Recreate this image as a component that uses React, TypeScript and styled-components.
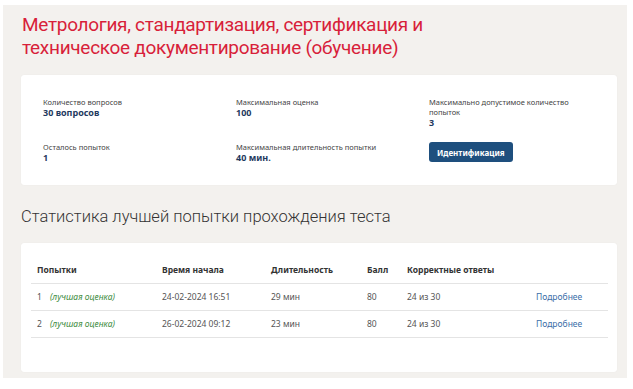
import React, { FC } from 'react';
import styled, { createGlobalStyle } from 'styled-components';

const GlobalStyle = createGlobalStyle`
  html, body {
    margin: 0;
    padding: 0;
    background: #fff;
  }
  * {
    box-sizing: border-box;
  }
`;

const Page = styled.div`
  margin: 5px 6px 11px 3px;
  height: 373px;
  background: #f3f1ee;
  padding: 8px 10px 0 18px;
  font-family: 'Noto Sans', 'Open Sans', sans-serif;
`;

const Title = styled.h1`
  margin: 0 0 16px 1px;
  font-family: Roboto, 'Liberation Sans', sans-serif;
  font-weight: 400;
  font-size: 19px;
  letter-spacing: -0.3px;
  line-height: 23px;
  color: #d81f3a;
  width: 440px;
`;

const Card = styled.div`
  background: #fff;
  border-radius: 3px;
  box-shadow: 0 0 1px rgba(0, 0, 0, 0.08);
`;

const InfoCard = styled(Card)`
  padding: 22px 10px 21px 22px;
  display: grid;
  grid-template-columns: 193px 193px 1fr;
  row-gap: 13px;
`;

const Info = styled.div`
  display: flex;
  flex-direction: column;
  align-items: flex-start;
`;

const Label = styled.div`
  font-size: 7.5px;
  line-height: 10px;
  color: #444;
  max-width: 150px;
`;

const Value = styled.div`
  font-size: 9px;
  line-height: 12px;
  font-weight: 700;
  color: #1f3a60;
`;

const Button = styled.button`
  height: 20px;
  padding: 0 8px;
  border: none;
  border-radius: 3px;
  background: #1e4f7e;
  color: #fff;
  font-family: inherit;
  font-size: 8px;
  font-weight: 700;
  cursor: pointer;
`;

const Heading = styled.h2`
  margin: 21px 0 15px;
  font-family: Roboto, 'Liberation Sans', sans-serif;
  font-weight: 300;
  font-size: 16.5px;
  line-height: 22px;
  color: #333;
`;

const TableCard = styled(Card)`
  padding: 13px 9px 34px 10px;
`;

const Table = styled.table`
  width: 100%;
  border-collapse: collapse;
  table-layout: fixed;
  font-size: 8.5px;
  color: #555;
`;

const Th = styled.th<{ $w?: number }>`
  width: ${(p) => (p.$w ? `${p.$w}px` : 'auto')};
  height: 27px;
  padding: 0 6px;
  text-align: left;
  font-weight: 700;
  color: #333;
  border-bottom: 1px solid #e4e4e4;
`;

const Td = styled.td`
  height: 27px;
  padding: 0 6px;
  border-bottom: 1px solid #e4e4e4;
  white-space: nowrap;
`;

const Best = styled.i`
  margin-left: 8px;
  color: #3d8b3d;
`;

const More = styled.a`
  color: #3c6ea8;
  text-decoration: none;
  cursor: pointer;
`;

const attempts = [
  { n: 1, start: '24-02-2024 16:51', dur: '29 мин', score: 80, correct: '24 из 30' },
  { n: 2, start: '26-02-2024 09:12', dur: '23 мин', score: 80, correct: '24 из 30' },
];

const App: FC = () => (
  <>
    <GlobalStyle />
    <Page>
      <Title>Метрология, стандартизация, сертификация и техническое документирование (обучение)</Title>

      <InfoCard>
        <Info>
          <Label>Количество вопросов</Label>
          <Value>30 вопросов</Value>
        </Info>
        <Info>
          <Label>Максимальная оценка</Label>
          <Value>100</Value>
        </Info>
        <Info>
          <Label>Максимально допустимое количество попыток</Label>
          <Value>3</Value>
        </Info>
        <Info>
          <Label>Осталось попыток</Label>
          <Value>1</Value>
        </Info>
        <Info>
          <Label>Максимальная длительность попытки</Label>
          <Value>40 мин.</Value>
        </Info>
        <Info>
          <Button>Идентификация</Button>
        </Info>
      </InfoCard>

      <Heading>Статистика лучшей попытки прохождения теста</Heading>

      <TableCard>
        <Table>
          <thead>
            <tr>
              <Th $w={125}>Попытки</Th>
              <Th $w={109}>Время начала</Th>
              <Th $w={96}>Длительность</Th>
              <Th $w={40}>Балл</Th>
              <Th $w={129}>Корректные ответы</Th>
              <Th />
            </tr>
          </thead>
          <tbody>
            {attempts.map((a) => (
              <tr key={a.n}>
                <Td>
                  {a.n}
                  <Best>(лучшая оценка)</Best>
                </Td>
                <Td>{a.start}</Td>
                <Td>{a.dur}</Td>
                <Td>{a.score}</Td>
                <Td>{a.correct}</Td>
                <Td>
                  <More>Подробнее</More>
                </Td>
              </tr>
            ))}
          </tbody>
        </Table>
      </TableCard>
    </Page>
  </>
);

export default App;
